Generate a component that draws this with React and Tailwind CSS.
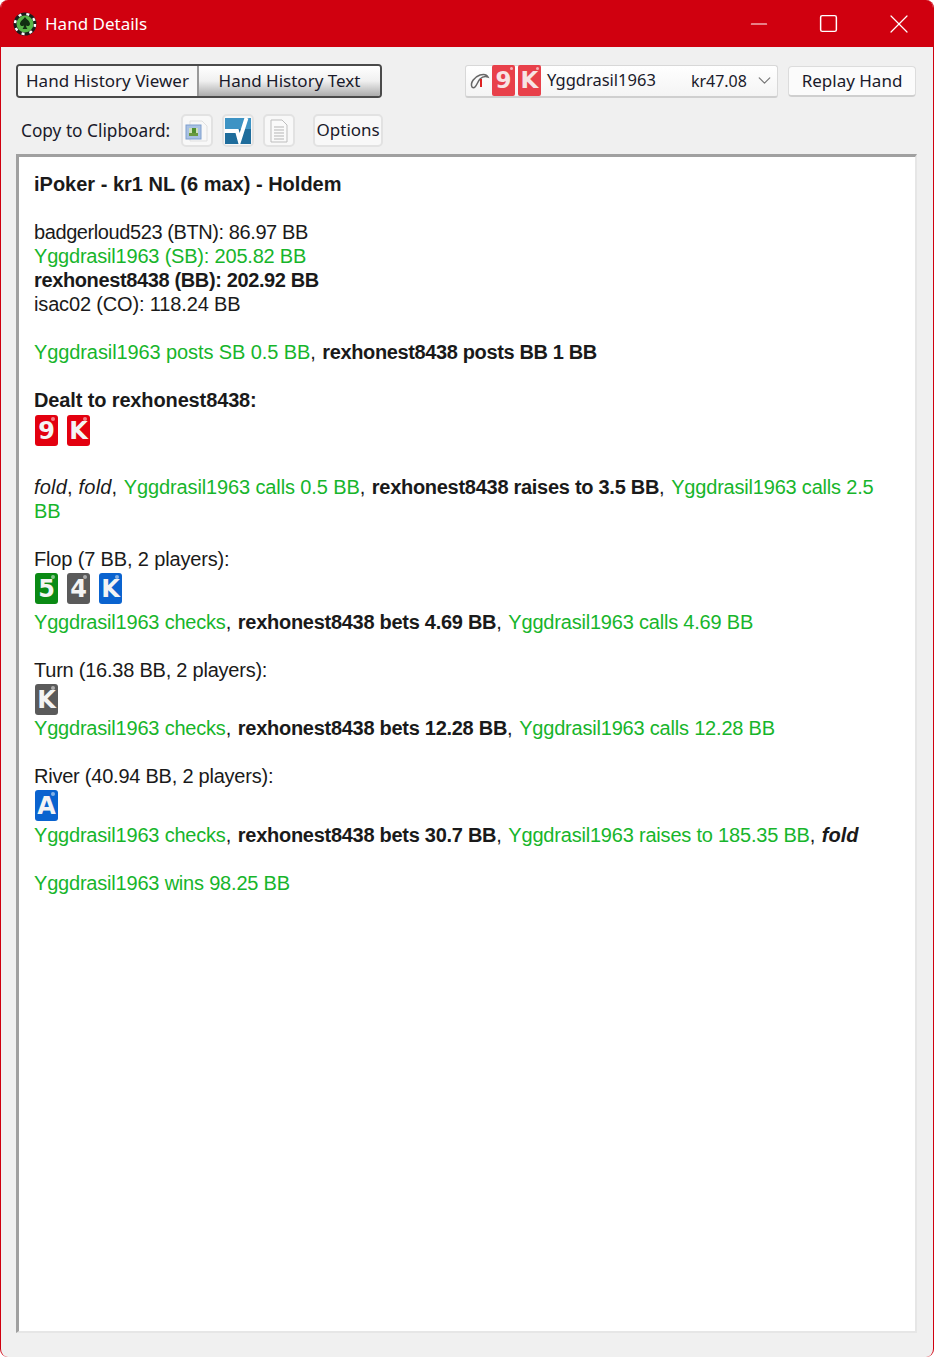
import { Minus, Square, X, ChevronDown } from 'lucide-react'

const uiFont = 'font-["Noto_Sans",sans-serif]'
const green = 'text-[#17b52b] tracking-[-0.2px]'
const bold = 'font-bold tracking-[-0.37px]'
const betBold = 'font-bold tracking-[-0.28px]'

// Small card tile, letter is real text
function Card({ rank, color, small }) {
  if (small) {
    return (
      <div className={`relative flex h-[31px] w-[23px] items-center justify-center rounded-[2px] ${color} font-["DejaVu_Sans",sans-serif] text-[23px] font-bold leading-none text-[#f7e4e4]`}>
        {rank}
        <span className="absolute right-[2px] top-[2px] h-[3px] w-[3px] rounded-full bg-white/60" />
      </div>
    )
  }
  return (
    <div className={`relative flex h-[31px] w-[23px] items-center justify-center rounded-[3px] ${color} font-["DejaVu_Sans",sans-serif] text-[24px] font-bold leading-none text-[#f4f4f4]`}>
      {rank}
      <span className="absolute right-[3px] top-[2px] h-[4px] w-[4px] rounded-full bg-white/50" />
    </div>
  )
}

function ChipLogo() {
  return (
    <svg width="24" height="24" viewBox="0 0 24 24">
      <circle cx="12" cy="12" r="11.5" fill="#1c1c1c" />
      <circle cx="12" cy="12" r="8.500" fill="#58b548" />
      <circle cx="12" cy="12" r="10" fill="none" stroke="#fff" strokeWidth="2.4" strokeDasharray="3 5.03" />
      <path d="M12 5c1.500 2.400 5 4 5 7 0 2-2.700 2.800-4 1.200.1 1.500.5 2.500 1.400 3.800H9.600c.9-1.300 1.300-2.300 1.400-3.800C9.700 14.800 7 14 7 12c0-3 3.500-4.600 5-7z" fill="#123012" />
    </svg>
  )
}

function IconButton({ children }) {
  return (
    <button className="flex h-[33px] w-[32px] items-center justify-center rounded-[5px] border-2 border-[#e2e2e2] bg-[#f8f8f8]">
      {children}
    </button>
  )
}

function PictureIcon() {
  return (
    <svg width="26" height="24" viewBox="0 0 26 24">
      <path d="M6 2h12l5 5v15H6z" fill="#f8f8f8" stroke="#e0e0e0" />
      <rect x="2" y="6" width="15" height="14" fill="#a9c1e3" stroke="#7f9fce" />
      <rect x="5" y="9" width="9" height="8" fill="#cfe0b8" />
      <rect x="8" y="9" width="4" height="5" fill="#4f8f2f" />
      <rect x="5" y="14" width="9" height="3" fill="#6a9a3f" />
    </svg>
  )
}

function SiteIcon() {
  return (
    <svg width="26" height="26" viewBox="0 0 26 26">
      <rect width="26" height="26" fill="#1f6d9c" />
      <rect width="26" height="11" fill="#3d93c4" />
      <path d="M0 13h12l2.500 9L21.500 0" fill="none" stroke="#fff" strokeWidth="4" />
    </svg>
  )
}

function DocIcon() {
  return (
    <svg width="22" height="24" viewBox="0 0 22 24" fill="none">
      <path d="M3 1h11l5 5v17H3z" fill="#fafafa" stroke="#bdbdbd" />
      <path d="M6 8h10M6 11h10M6 14h10M6 17h10M6 20h10" stroke="#b5b5b5" />
    </svg>
  )
}

// comma between actions sits a bit wider in the original
function Sep() {
  return <span className="tracking-[0.5px]">, </span>
}

function HandText() {
  return (
    <div className='font-["Liberation_Sans",sans-serif] text-[20px] leading-[24px] text-[#1a1a1a]'>
      <div className="font-bold">iPoker - kr1 NL (6 max) - Holdem</div>

      <div className="mt-[24px] tracking-[-0.41px]">badgerloud523 (BTN): 86.97 BB</div>
      <div className={green}>Yggdrasil1963 (SB): 205.82 BB</div>
      <div className={bold}>rexhonest8438 (BB): 202.92 BB</div>
      <div className="tracking-[-0.15px]">isac02 (CO): 118.24 BB</div>

      <div className="mt-[24px]">
        <span className="text-[#17b52b] tracking-[-0.1px]">Yggdrasil1963 posts SB 0.5 BB</span><Sep /><span className={bold}>rexhonest8438 posts BB 1 BB</span>
      </div>

      <div className="mt-[24px] font-bold tracking-[-0.13px]">Dealt to rexhonest8438:</div>
      <div className="ml-px flex h-[39px] gap-[9px] pt-[3px]">
        <Card rank="9" color="bg-[#e3000f]" />
        <Card rank="K" color="bg-[#e3000f]" />
      </div>

      <div className="mt-[24px]">
        <span className="tracking-[0.2px]"><i>fold</i>, <i>fold</i></span><Sep /><span className="text-[#17b52b] tracking-[-0.12px]">Yggdrasil1963 calls 0.5 BB</span><Sep /><span className={betBold}>rexhonest8438 raises to 3.5 BB</span><Sep /><span className={green}>Yggdrasil1963 calls 2.5 BB</span>
      </div>

      <div className="mt-[24px] tracking-[-0.15px]">Flop (7 BB, 2 players):</div>
      <div className="ml-px flex h-[39px] gap-[9px] pt-[2px]">
        <Card rank="5" color="bg-[#0a8a14]" />
        <Card rank="4" color="bg-[#5a5a5a]" />
        <Card rank="K" color="bg-[#0a63cf]" />
      </div>
      <div>
        <span className={green}>Yggdrasil1963 checks</span><Sep /><span className={betBold}>rexhonest8438 bets 4.69 BB</span><Sep /><span className={green}>Yggdrasil1963 calls 4.69 BB</span>
      </div>

      <div className="mt-[24px] tracking-[-0.23px]">Turn (16.38 BB, 2 players):</div>
      <div className="ml-px flex h-[34px] pt-[2px]">
        <Card rank="K" color="bg-[#5a5a5a]" />
      </div>
      <div>
        <span className={green}>Yggdrasil1963 checks</span><Sep /><span className={betBold}>rexhonest8438 bets 12.28 BB</span><Sep /><span className={green}>Yggdrasil1963 calls 12.28 BB</span>
      </div>

      <div className="mt-[24px] tracking-[-0.23px]">River (40.94 BB, 2 players):</div>
      <div className="ml-px flex h-[35px] pt-[2px]">
        <Card rank="A" color="bg-[#0a63cf]" />
      </div>
      <div>
        <span className={green}>Yggdrasil1963 checks</span><Sep /><span className={betBold}>rexhonest8438 bets 30.7 BB</span><Sep /><span className={green}>Yggdrasil1963 raises to 185.35 BB</span><Sep /><b><i>fold</i></b>
      </div>

      <div className={`mt-[24px] ${green}`}>Yggdrasil1963 wins 98.25 BB</div>
    </div>
  )
}

export default function App() {
  return (
    <div className={`flex h-[1357px] w-[934px] flex-col overflow-hidden rounded-[8px] border-x border-[#d0000f] bg-[#f0f0f0] ${uiFont}`}>
      {/* Title bar */}
      <div className="-mx-px flex h-[47px] shrink-0 items-center bg-[#d0000f] text-white">
        <div className="ml-[13px]"><ChipLogo /></div>
        <div className="ml-[8px] text-[17px] leading-none">Hand Details</div>
        <div className="ml-auto flex items-center">
          <div className="flex w-[66px] justify-center"><Minus size={26} strokeWidth={1.1} /></div>
          <div className="flex w-[72px] justify-center"><Square size={21} strokeWidth={1.7} /></div>
          <div className="flex w-[70px] justify-center"><X size={32} strokeWidth={0.9} /></div>
        </div>
      </div>

      {/* Tabs + player picker */}
      <div className="mt-[17px] flex items-center pl-[15px] pr-[17px] text-[#1a1a2a]">
        <div className="flex h-[34px] w-[366px] overflow-hidden rounded-[4px] border-2 border-[#4a4a4a] text-[17px] leading-none">
          <div className="flex w-[181px] items-center justify-center border-r-2 border-[#9a9a9a] bg-[#f7f7f7] pb-[2px]">Hand History Viewer</div>
          <div className="flex flex-1 items-center justify-center bg-gradient-to-b from-[#ffffff] via-[#f0f0f0] to-[#adadad] pb-[2px]">Hand History Text</div>
        </div>

        <div className="ml-[83px] flex h-[33px] w-[313px] items-center rounded-[3px] border border-[#d8d8d8] border-b-2 border-b-[#cfcfcf] bg-gradient-to-b from-[#ffffff] to-[#f4f4f4] pl-[3px] text-[16.500px] leading-none">
          <svg width="22" height="22" viewBox="0 0 22 22" fill="none" className="mr-[1px]">
            <path d="M3 17C1 13 5 7 11 5c4-1 7 0 8 2-3-1-6 0-8 2-2 2-3 6-5 8-1 1-2 1-3 0z" stroke="#666" strokeWidth="1.5" />
            <path d="M12 9v8" stroke="#d22" strokeWidth="2" />
          </svg>
          <div className="flex gap-[3px]">
            <Card small rank="9" color="bg-[#e8404a]" />
            <Card small rank="K" color="bg-[#e8404a]" />
          </div>
          <span className="ml-[6px]">Yggdrasil1963</span>
          <span className="ml-[35px] text-[16px]">kr47.08</span>
          <ChevronDown size={21} strokeWidth={1.4} className="ml-auto mr-[2px] text-[#777]" />
        </div>

        <button className="ml-[10px] h-[31px] w-[128px] rounded-[4px] border border-[#dcdcdc] border-b-2 border-b-[#cfcfcf] bg-[#fbfbfb] pb-[1px] text-[17px] leading-none">
          Replay Hand
        </button>
      </div>

      {/* Clipboard row */}
      <div className="mt-[16px] flex items-center pl-[20px] text-[17.250px] leading-none text-[#1a1a2a]">
        <span>Copy to Clipboard:</span>
        <div className="ml-[11px] flex gap-[9px]">
          <IconButton><PictureIcon /></IconButton>
          <IconButton><SiteIcon /></IconButton>
          <IconButton><DocIcon /></IconButton>
        </div>
        <button className="ml-[18px] h-[33px] w-[70px] rounded-[5px] border-2 border-[#e2e2e2] bg-[#f8f8f8] pb-[2px] text-[17px]">Options</button>
      </div>

      {/* Hand text panel */}
      <div className="ml-[15px] mt-[7px] mb-[24px] w-[901px] flex-1 border-l-[3px] border-t-[3px] border-r-2 border-b-2 border-l-[#a0a0a0] border-t-[#a0a0a0] border-r-[#e6e6e6] border-b-[#e6e6e6] bg-white pl-[15px] pr-[26px] pt-[15px]">
        <HandText />
      </div>
    </div>
  )
}
